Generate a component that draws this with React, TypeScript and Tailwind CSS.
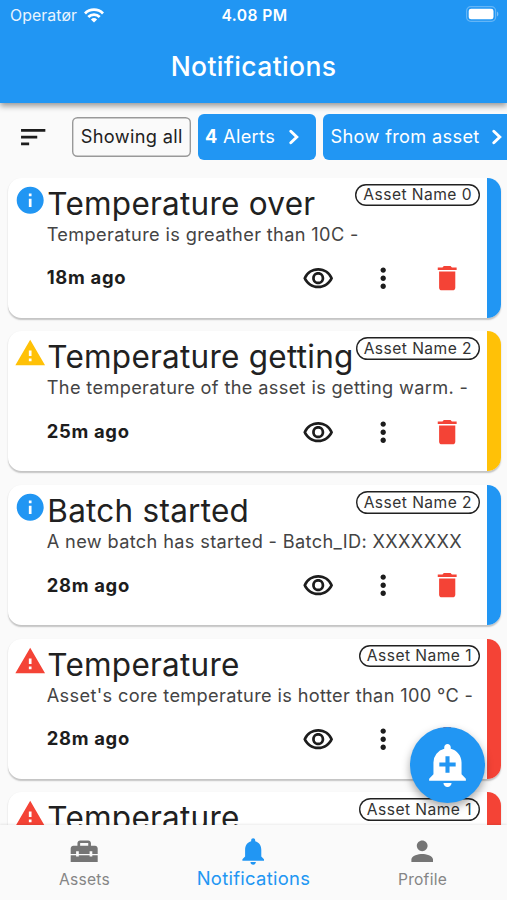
import { MdAddAlert, MdDelete, MdHomeRepairService, MdInfo, MdMoreVert, MdNotifications, MdOutlineRemoveRedEye, MdPerson, MdSort, MdWarning } from 'react-icons/md'

type Level = 'info' | 'warning' | 'error'

interface Notification {
  title: string
  body: string
  time: string
  asset: string
  level: Level
}

const notifications: Notification[] = [
  { title: 'Temperature over', body: 'Temperature is greather than 10C -', time: '18m ago', asset: 'Asset Name 0', level: 'info' },
  { title: 'Temperature getting', body: 'The temperature of the asset is getting warm. -', time: '25m ago', asset: 'Asset Name 2', level: 'warning' },
  { title: 'Batch started', body: 'A new batch has started - Batch_ID: XXXXXXX', time: '28m ago', asset: 'Asset Name 2', level: 'info' },
  { title: 'Temperature', body: "Asset's core temperature is hotter than 100 °C -", time: '28m ago', asset: 'Asset Name 1', level: 'error' },
  { title: 'Temperature', body: "Asset's core temperature is hotter than 100 °C -", time: '28m ago', asset: 'Asset Name 1', level: 'error' },
]

const LEVELS = {
  info: { icon: MdInfo, text: 'text-[#2196f3]', bar: 'bg-[#2196f3]' },
  warning: { icon: MdWarning, text: 'text-[#ffc107]', bar: 'bg-[#ffc107]' },
  error: { icon: MdWarning, text: 'text-[#f44336]', bar: 'bg-[#f44336]' },
}

const navItems = [
  { icon: MdHomeRepairService, label: 'Assets', active: false },
  { icon: MdNotifications, label: 'Notifications', active: true },
  { icon: MdPerson, label: 'Profile', active: false },
]

function Chevron() {
  return (
    <svg viewBox="0 0 10 16" className="h-4 w-2.5 shrink-0" fill="none" stroke="currentColor" strokeWidth="2.9" strokeLinecap="round">
      <path d="M1.8 2.2 7.8 8l-6 5.8" />
    </svg>
  )
}

function StatusBar() {
  return (
    <div className="grid h-[30px] grid-cols-3 items-center pr-2 pl-2.5 text-base">
      <div className="flex items-center gap-[7px]">
        <span className="pt-px text-[15.8px] tracking-[0.1px] opacity-90">Operatør</span>
        <svg viewBox="0 0 20 15" className="h-[15px] w-5" fill="none" stroke="currentColor" strokeWidth="2.8">
          <path d="M1 5.4a12.8 12.8 0 0 1 18 0" />
          <path d="M4.3 8.9a8.1 8.1 0 0 1 11.4 0" />
          <path d="M10 14.6 6.9 11.5a4.5 4.5 0 0 1 6.2 0z" fill="currentColor" stroke="none" />
        </svg>
      </div>
      <span className="pt-px text-center text-[15.6px] font-semibold tracking-[0.4px] whitespace-nowrap">4.08 PM</span>
      <svg viewBox="0 0 33 16" className="mb-0.5 h-4 w-[33px] justify-self-end">
        <rect x="0.6" y="0.6" width="29" height="14.8" rx="4.2" fill="none" stroke="white" strokeOpacity="0.3" strokeWidth="1.2" />
        <rect x="2.7" y="2.7" width="24.8" height="10.6" rx="2.4" fill="white" />
        <path d="M31 5.5c1.8.8 1.8 4.2 0 5z" fill="white" fillOpacity="0.4" />
      </svg>
    </div>
  )
}

function NotificationCard({ item }: { item: Notification }) {
  const level = LEVELS[item.level]
  return (
    <article className="flex h-[140px] shrink-0 overflow-hidden rounded-[13.5px] bg-white shadow-[0_1.3px_1.5px_rgba(0,0,0,0.22)]">
      <div className="flex min-w-0 flex-1 pt-1.5 pr-[7px] pl-[6.3px]">
        <level.icon className={`h-[32.4px] w-[32.4px] shrink-0 ${level.text}`} />
        <div className="min-w-0 flex-1">
          <div className="flex h-[38px] items-start justify-between">
            <h2 className="pl-[0.6px] text-[31.5px] leading-[39px] tracking-[0.25px] whitespace-nowrap text-[#212121]">{item.title}</h2>
            <span className="flex h-[22.5px] shrink-0 items-center rounded-full px-2 text-[15.6px] tracking-[0.45px] whitespace-nowrap text-[#333] shadow-[inset_0_0_0_1.4px_#212121]">
              {item.asset}
            </span>
          </div>
          <p className="text-[18.2px] leading-6 tracking-[0.35px] whitespace-nowrap text-[#444]">{item.body}</p>
          <div className="flex h-[65px] items-center text-[#1d1d1d]">
            <span className="flex-1 text-[18.4px] font-bold tracking-[0.7px]">{item.time}</span>
            <button className="flex w-[64.8px] justify-center" aria-label="View">
              <MdOutlineRemoveRedEye className="h-[32.4px] w-[32.4px]" />
            </button>
            <button className="flex w-[64.8px] justify-center" aria-label="More">
              <MdMoreVert className="h-[32.4px] w-[32.4px]" />
            </button>
            <button className="flex w-[64.8px] justify-center text-[#f44336]" aria-label="Delete">
              <MdDelete className="h-[32.4px] w-[32.4px]" />
            </button>
          </div>
        </div>
      </div>
      <div className={`w-[13.5px] shrink-0 ${level.bar}`} />
    </article>
  )
}

export default function App() {
  return (
    <div className="relative flex h-[900px] w-[507px] flex-col overflow-hidden bg-[#fafafa] font-['Inter',sans-serif]">
      <header className="z-10 h-[103px] shrink-0 bg-[#2196f3] text-white shadow-[0_3px_6px_rgba(0,0,0,0.4)]">
        <StatusBar />
        <h1 className="text-center text-[26.5px] leading-[73px] font-medium tracking-[0.35px]">Notifications</h1>
      </header>

      {/* Filters */}
      <div className="flex h-[74.7px] shrink-0 items-center pb-[6.7px] text-[18.2px] tracking-[0.33px] whitespace-nowrap">
        <button className="flex w-[72.4px] shrink-0 justify-center pr-1.5" aria-label="Sort">
          <MdSort className="h-[32.4px] w-[32.4px] text-[#1d1d1d]" />
        </button>
        <button className="h-10 w-[118.6px] shrink-0 rounded-[5.5px] text-[#212121] shadow-[inset_0_0_0_1.4px_#999]">Showing all</button>
        <button className="ml-[7px] flex h-[46px] w-[118.5px] shrink-0 items-center justify-between rounded-md bg-[#2196f3] pr-[17.5px] pl-[7px] text-white">
          <span><b>4</b> Alerts</span>
          <Chevron />
        </button>
        <button className="ml-[7px] flex h-[46px] w-[200px] shrink-0 items-center gap-3 rounded-md bg-[#2196f3] pl-[7px] text-white">
          <span>Show from asset</span>
          <Chevron />
        </button>
      </div>

      <main className="flex min-h-0 flex-1 flex-col gap-[13.7px] overflow-hidden pr-[6.5px] pl-2">
        {notifications.map((item, i) => (
          <NotificationCard key={i} item={item} />
        ))}
      </main>

      <button
        className="absolute top-[727px] left-[409.6px] flex h-[75.7px] w-[75.7px] items-center justify-center rounded-full bg-[#2196f3] text-white shadow-[0_4px_8px_rgba(0,0,0,0.35)]"
        aria-label="Add alert"
      >
        <MdAddAlert className="h-[49px] w-[49px]" />
      </button>

      {/* Bottom nav */}
      <nav className="z-10 grid h-[75.5px] shrink-0 grid-cols-3 bg-[#fafafa] shadow-[0_-1px_2px_rgba(0,0,0,0.08)]">
        {navItems.map((item) => (
          <a key={item.label} className={`flex flex-col items-center pt-[10.5px] ${item.active ? 'text-[#2196f3]' : 'text-[#757575]'}`}>
            <item.icon className="h-[32.4px] w-[32.4px]" />
            <span className={item.active ? 'text-[18.4px] leading-[23px] tracking-[0.3px]' : 'pt-px text-[15.6px] leading-6 tracking-[0.25px] text-[#858585]'}>
              {item.label}
            </span>
          </a>
        ))}
      </nav>
    </div>
  )
}
